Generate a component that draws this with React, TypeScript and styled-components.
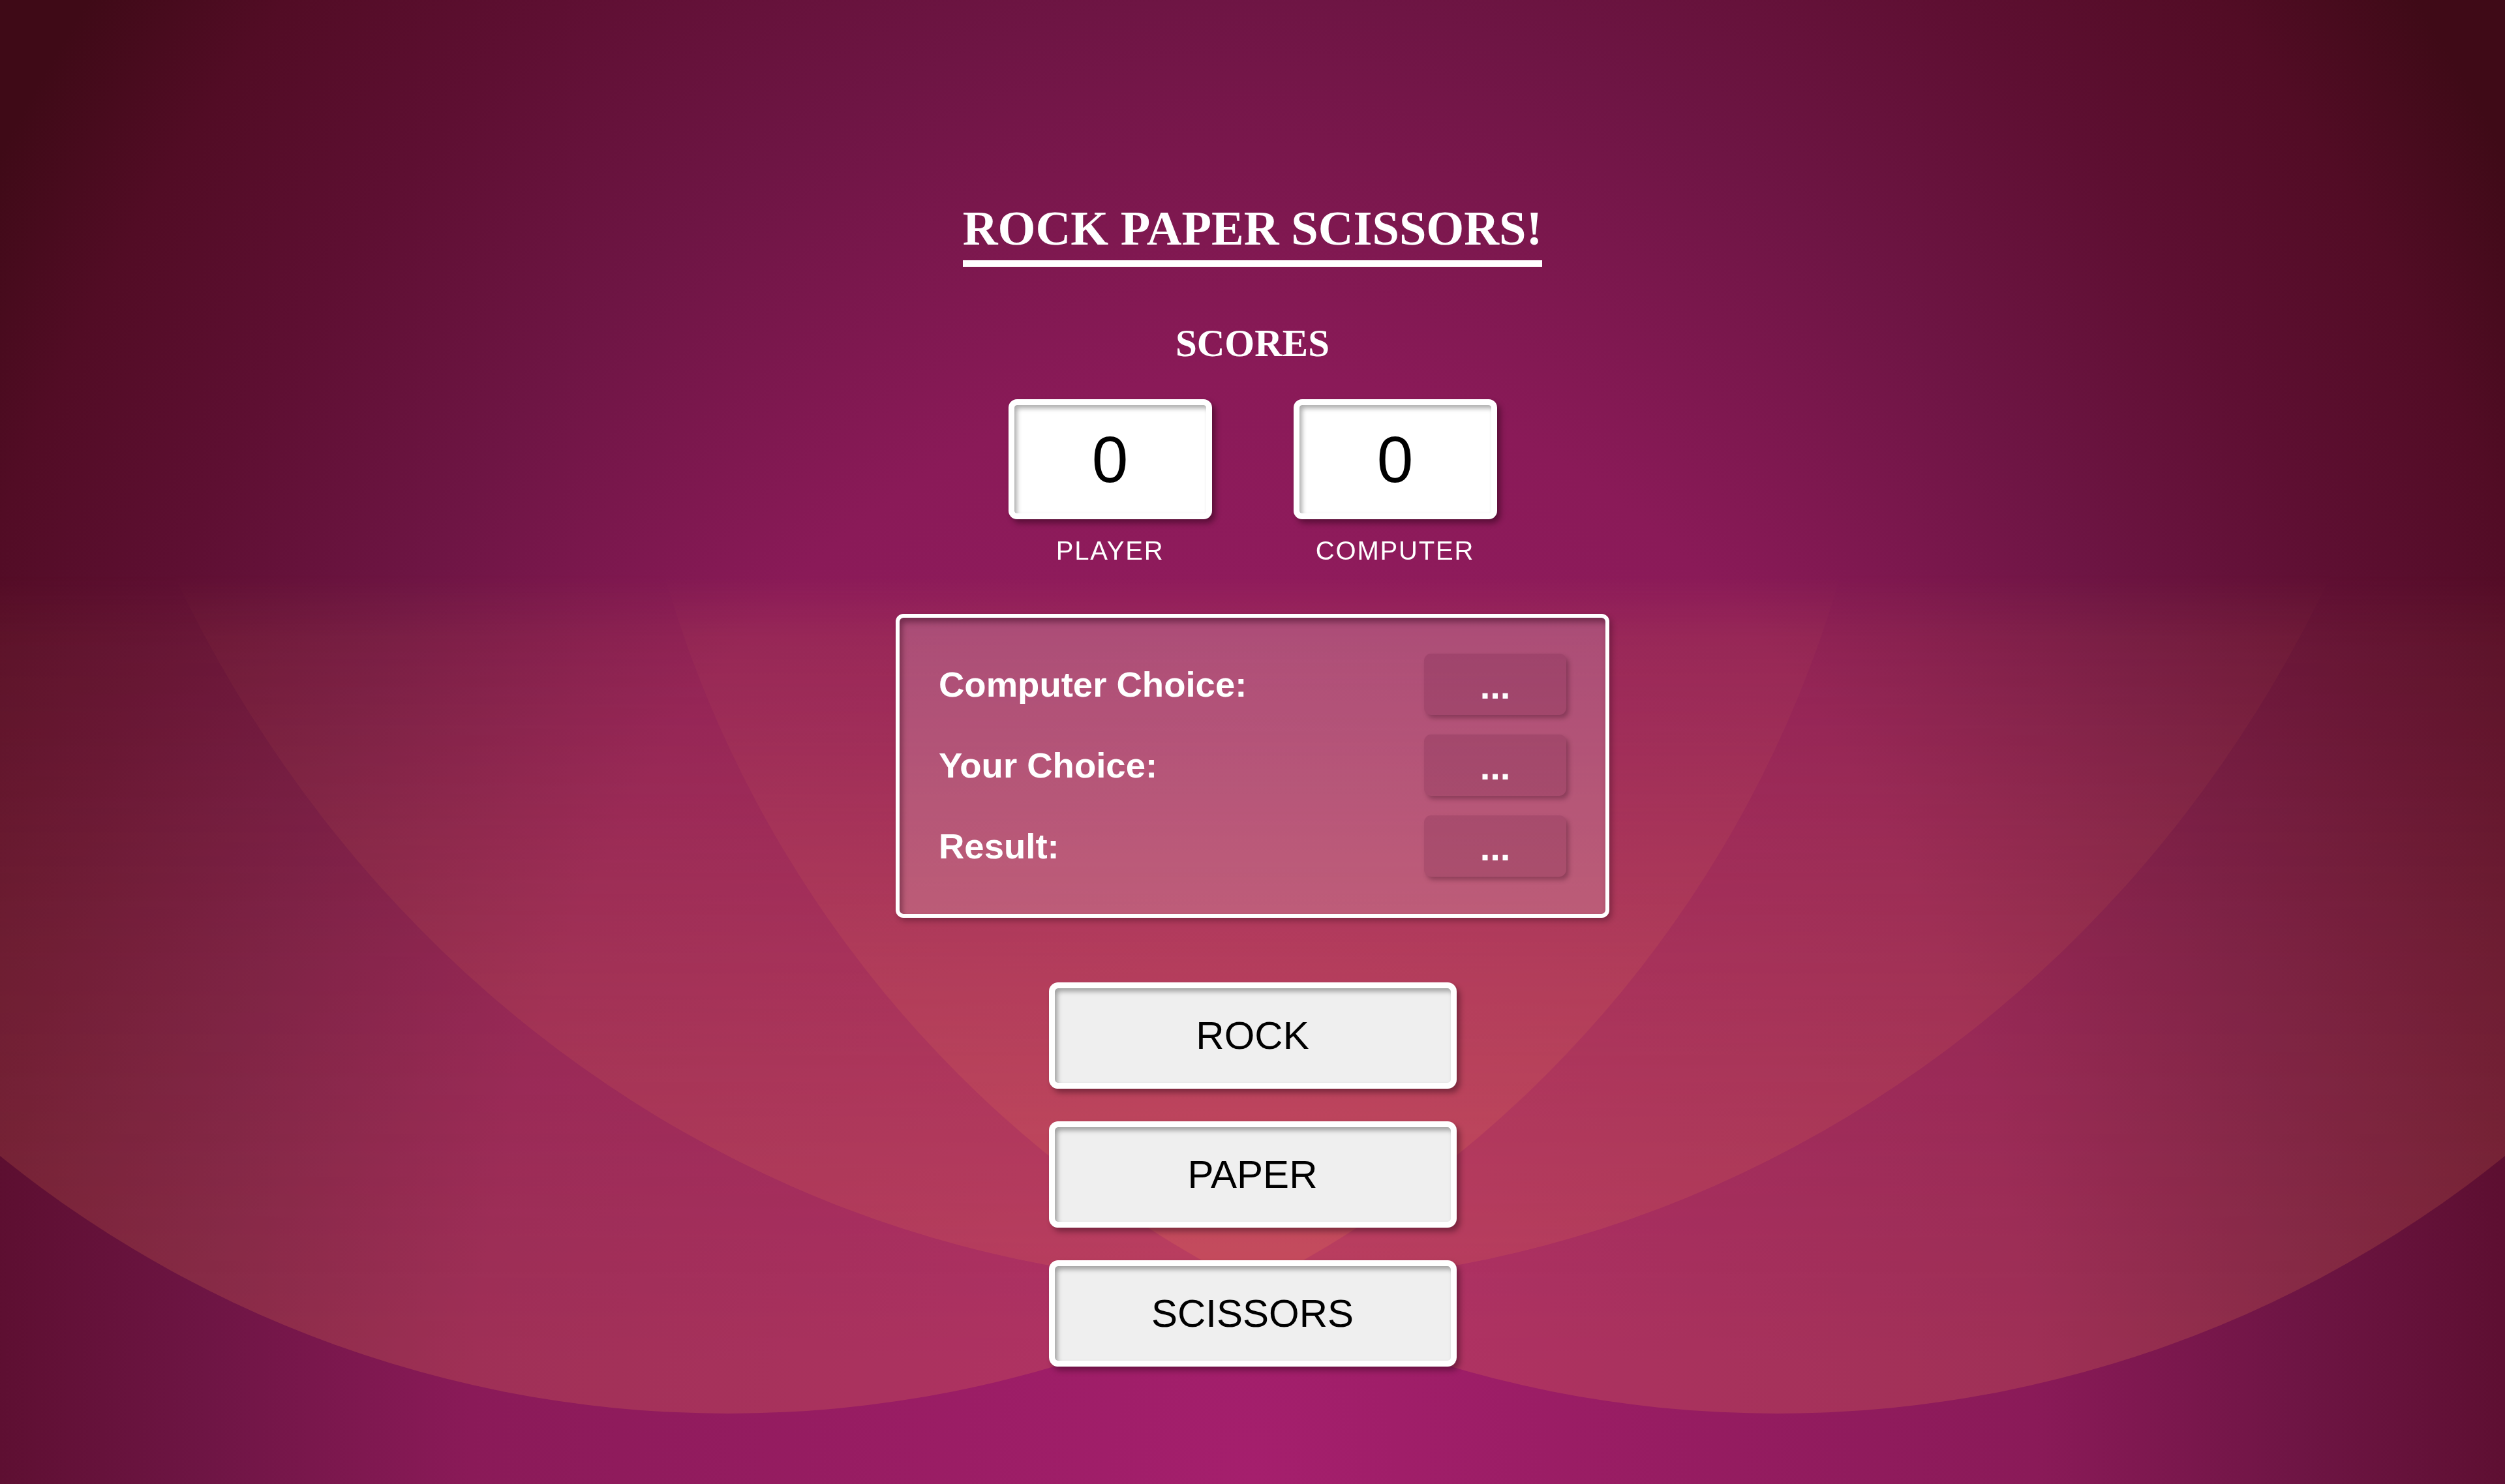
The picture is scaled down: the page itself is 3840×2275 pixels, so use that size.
import React from "react";
import styled, { createGlobalStyle } from "styled-components";

const GlobalStyle = createGlobalStyle`
  html, body {
    margin: 0;
    padding: 0;
  }
  body {
    background: #6a1544;
    font-family: "Liberation Sans", Arial, Helvetica, sans-serif;
    color: #fff;
  }
  *, *::before, *::after {
    box-sizing: border-box;
  }
`;

const Page = styled.main`
  position: relative;
  isolation: isolate;
  min-height: 100vh;
  display: flex;
  flex-direction: column;
  align-items: center;
  padding-top: 309px;
`;

const BackdropSvg = styled.svg`
  position: fixed;
  inset: 0;
  width: 100%;
  height: 100%;
  z-index: -1;
  display: block;
  pointer-events: none;
`;

const Title = styled.h1`
  margin: 0;
  font-family: "Liberation Serif", "Times New Roman", serif;
  font-weight: 700;
  font-size: 74.5px;
  line-height: 83px;
  padding-bottom: 7px;
  border-bottom: 10px solid #fff;
  color: #fff;
`;

const SectionHeading = styled.h2`
  margin: 85px 0 0;
  font-family: "Liberation Serif", "Times New Roman", serif;
  font-weight: 700;
  font-size: 59px;
  line-height: 65px;
  color: #fff;
`;

const ScoreRow = styled.div`
  margin-top: 53px;
  display: flex;
  gap: 125px;
`;

const ScoreColumn = styled.div`
  display: flex;
  flex-direction: column;
  align-items: center;
  width: 312px;
`;

const ScoreBox = styled.div`
  width: 312px;
  height: 184px;
  border: 9px solid #fff;
  border-radius: 13px;
  background: #fff;
  box-shadow: inset 4px 5px 7px rgba(0, 0, 0, 0.32),
    5px 6px 9px rgba(30, 0, 15, 0.45);
  display: flex;
  align-items: center;
  justify-content: center;
  font-size: 100px;
  line-height: 1;
  color: #000;
`;

const ScoreLabel = styled.div`
  margin-top: 25px;
  font-size: 40px;
  line-height: 46px;
  letter-spacing: 1.8px;
  color: #fff;
`;

const ChoicePanel = styled.section`
  margin-top: 74px;
  width: 1094px;
  height: 466px;
  padding: 55px 60px 56px 60px;
  border: 6px solid #fff;
  border-radius: 12px;
  background: rgba(255, 255, 255, 0.18);
  box-shadow: inset 4px 7px 9px rgba(40, 0, 20, 0.4),
    4px 5px 8px rgba(30, 0, 15, 0.3);
  display: flex;
  flex-direction: column;
  gap: 30px;
`;

const ChoiceRow = styled.div`
  display: flex;
  align-items: center;
  justify-content: space-between;
  height: 94px;
`;

const ChoiceLabel = styled.span`
  font-weight: 700;
  font-size: 54.5px;
  color: #fff;
`;

const ChoiceValue = styled.span`
  width: 218px;
  height: 94px;
  padding-top: 4px;
  border-radius: 11px;
  background: rgba(70, 10, 40, 0.14);
  box-shadow: 4px 5px 7px rgba(40, 0, 20, 0.3);
  display: flex;
  align-items: center;
  justify-content: center;
  font-weight: 700;
  font-size: 56px;
  color: #fff;
`;

const ButtonStack = styled.div`
  margin-top: 99px;
  display: flex;
  flex-direction: column;
  gap: 50px;
`;

const ChoiceButton = styled.button`
  width: 625px;
  height: 163px;
  border: 9px solid #fff;
  border-radius: 14px;
  background: #efefef;
  box-shadow: inset 4px 5px 7px rgba(0, 0, 0, 0.32),
    5px 6px 9px rgba(30, 0, 15, 0.4);
  font-family: "Liberation Sans", Arial, Helvetica, sans-serif;
  font-size: 60px;
  color: #000;
  cursor: pointer;
  padding: 0;
`;

const Backdrop: React.FC = () => (
  <BackdropSvg viewBox="0 0 3840 2275" preserveAspectRatio="none" aria-hidden="true">
    <defs>
      <radialGradient
        id="bgGlow"
        gradientUnits="userSpaceOnUse"
        cx="1920"
        cy="2275"
        r="3400"
        gradientTransform="translate(1920 2275) scale(0.706 1) translate(-1920 -2275)"
      >
        <stop offset="0" stopColor="#a51f6d" />
        <stop offset="0.5" stopColor="#8a1a58" />
        <stop offset="0.67" stopColor="#6e1544" />
        <stop offset="0.8" stopColor="#5e0f32" />
        <stop offset="0.91" stopColor="#520c25" />
        <stop offset="1" stopColor="#3f0a17" />
      </radialGradient>
      <linearGradient id="shapeFade" gradientUnits="userSpaceOnUse" x1="0" y1="880" x2="0" y2="2100">
        <stop offset="0" stopColor="#fff" stopOpacity="0" />
        <stop offset="0.08" stopColor="#fff" stopOpacity="0.26" />
        <stop offset="0.5" stopColor="#fff" stopOpacity="0.64" />
        <stop offset="1" stopColor="#fff" stopOpacity="1" />
      </linearGradient>
      <mask id="shapeMask" maskUnits="userSpaceOnUse" x="0" y="0" width="3840" height="2275">
        <rect width="3840" height="2275" fill="url(#shapeFade)" />
      </mask>
    </defs>
    <rect width="3840" height="2275" fill="url(#bgGlow)" />
    <g mask="url(#shapeMask)" fill="#f2864e">
      <circle cx="1116" cy="393" r="1774" fillOpacity="0.21" />
      <circle cx="2724" cy="393" r="1774" fillOpacity="0.21" />
      <ellipse cx="1920" cy="0" rx="1849" ry="1968" fillOpacity="0.18" />
    </g>
  </BackdropSvg>
);

const scores = [
  { label: "PLAYER", value: 0 },
  { label: "COMPUTER", value: 0 },
];

const choices = ["Computer Choice:", "Your Choice:", "Result:"];
const moves = ["ROCK", "PAPER", "SCISSORS"];

export default function App() {
  return (
    <>
      <GlobalStyle />
      <Page>
        <Backdrop />
        <Title>ROCK PAPER SCISSORS!</Title>
        <SectionHeading>SCORES</SectionHeading>
        <ScoreRow>
          {scores.map((s) => (
            <ScoreColumn key={s.label}>
              <ScoreBox>{s.value}</ScoreBox>
              <ScoreLabel>{s.label}</ScoreLabel>
            </ScoreColumn>
          ))}
        </ScoreRow>
        <ChoicePanel>
          {choices.map((c) => (
            <ChoiceRow key={c}>
              <ChoiceLabel>{c}</ChoiceLabel>
              <ChoiceValue>...</ChoiceValue>
            </ChoiceRow>
          ))}
        </ChoicePanel>
        <ButtonStack>
          {moves.map((m) => (
            <ChoiceButton key={m} type="button">
              {m}
            </ChoiceButton>
          ))}
        </ButtonStack>
      </Page>
    </>
  );
}
